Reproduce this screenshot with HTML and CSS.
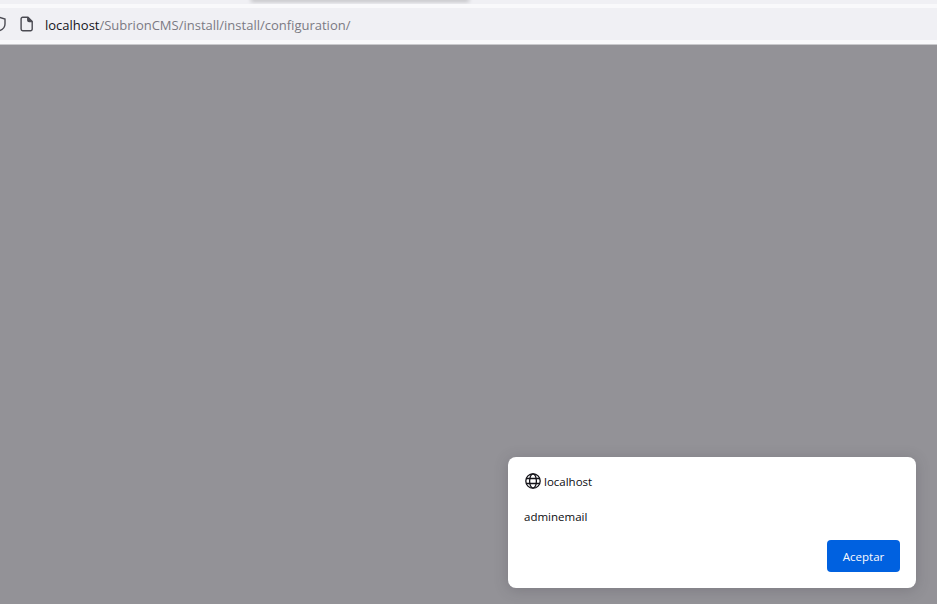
FILE: index.html
```html
<!DOCTYPE html>
<html lang="es">
<head>
<meta charset="utf-8">
<title>localhost</title>
<link rel="stylesheet" href="styles.css">
</head>
<body>
<div class="app">
  <header class="chrome">
    <div class="tabstrip"><div class="tab-shadow"></div></div>
    <div class="toolbar">
      <div class="urlbar">
        <svg class="shield" width="16" height="16" viewBox="0 0 16 16" fill="none" stroke="#4a4a52" stroke-width="1.4"><path d="M8 1.2 14 3v5c0 3.400-2.600 5.800-6 7-3.400-1.200-6-3.600-6-7V3z"/></svg>
        <svg class="page" width="14" height="16" viewBox="0 0 14 16" fill="none" stroke="#4a4a52" stroke-width="1.400" stroke-linejoin="round"><path d="M2.700 1.200h5.300l4.200 4.300v7.600a1.600 1.600 0 0 1-1.600 1.600H2.700a1.600 1.600 0 0 1-1.600-1.600V2.800a1.600 1.600 0 0 1 1.600-1.600z"/><path d="M7.800 1.200v3a1.300 1.300 0 0 0 1.300 1.300h3.100" fill="#4a4a52"/></svg>
        <span class="url"><span class="host">localhost</span>/SubrionCMS/install/install/configuration/</span>
      </div>
    </div>
  </header>
  <main class="stage">
    <section class="dialog">
      <div class="origin">
        <svg class="globe" width="16" height="16" viewBox="0 0 16 16" fill="none" stroke="#15141a" stroke-width="1.300"><circle cx="8" cy="8" r="7.200"/><ellipse cx="8" cy="8" rx="3.400" ry="7.200"/><path d="M1.300 5.500h13.400M1.300 10.500h13.400"/></svg>
        <span>localhost</span>
      </div>
      <p class="message">adminemail</p>
      <div class="actions"><button class="accept" type="button">Aceptar</button></div>
    </section>
  </main>
</div>
</body>
</html>
```
FILE: styles.css
```css
* { box-sizing: border-box; }
html, body { margin: 0; height: 100%; overflow: hidden; }
body { font-family: "Open Sans", "Noto Sans", "Liberation Sans", sans-serif; background: #939297; }
.app { display: flex; flex-direction: column; height: 604px; }
.chrome { flex: none; background: #f9f9fb; border-bottom: 1px solid #c9c9cc; height: 45px; }
.tabstrip { height: 4px; background: #f0f0f4; overflow: hidden; display: flex; padding-left: 252px; }
.tab-shadow { width: 216px; height: 0; box-shadow: 0 0 4px 1px rgba(0,0,0,.4); }
.toolbar { padding-top: 4px; }
.urlbar { height: 32px; background: #f0f0f4; display: flex; align-items: center; overflow: hidden; }
.shield { flex: none; margin-left: -9px; }
.page { flex: none; margin-left: 13px; }
.url { margin-left: 11px; padding-top: 2px; font-size: 13px; color: #7b7a83; white-space: nowrap; }
.host { color: #15141a; }
.stage { flex: 1; display: flex; justify-content: flex-end; align-items: flex-end; padding: 0 21px 16px 0; }
.dialog { width: 408px; height: 131px; background: #fff; border-radius: 8px; padding: 16px; box-shadow: 0 2px 14px rgba(58,57,68,.25); display: flex; flex-direction: column; color: #0c0c10; font-size: 11.500px; }
.origin { display: flex; align-items: center; gap: 4px; height: 16px; }
.globe { flex: none; margin-left: 1px; margin-right: -1px; }
.message { margin: 20px 0 0; line-height: 16px; }
.actions { margin-top: auto; display: flex; justify-content: flex-end; }
.accept { width: 73px; height: 32px; border: 0; border-radius: 4px; background: #0061e0; color: #fbfbfe; font: inherit; padding: 0; }
```
